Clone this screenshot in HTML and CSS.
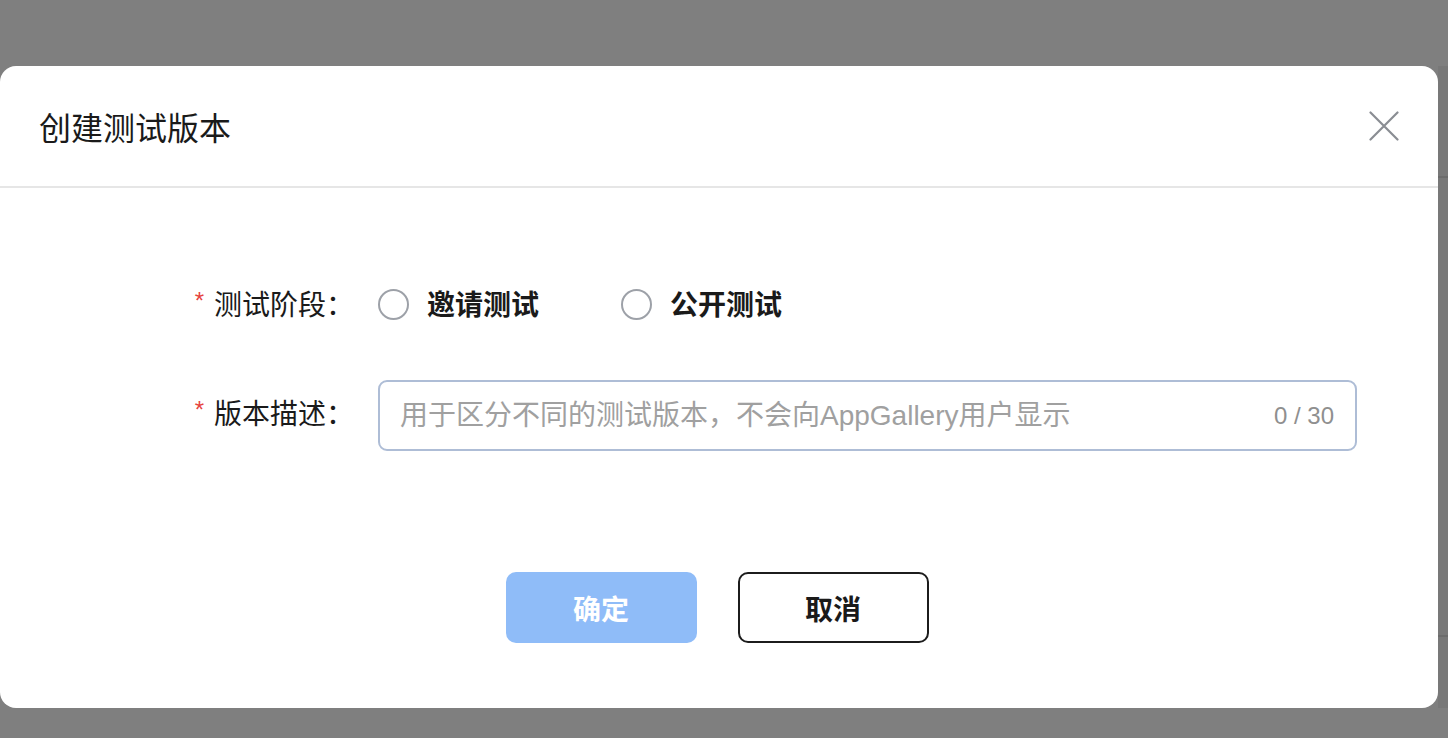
FILE: index.html
```html
<!DOCTYPE html>
<html lang="zh-CN">
<head>
<meta charset="utf-8">
<title>创建测试版本</title>
<link rel="stylesheet" href="styles.css">
</head>
<body>
<div class="page">
  <div class="dialog">
    <div class="dialog-header">
      <h1 class="dialog-title">创建测试版本</h1>
      <button class="close-btn" aria-label="关闭">
        <svg width="30" height="30" viewBox="0 0 30 30"><path d="M1.5 1.5 L28.5 28.5 M28.5 1.5 L1.5 28.5" stroke="#8a8d93" stroke-width="2.2" stroke-linecap="round" fill="none"/></svg>
      </button>
    </div>
    <div class="dialog-body">
      <div class="form-row row-radio">
        <div class="form-label"><span class="req">*</span>测试阶段：</div>
        <div class="form-control radios">
          <label class="radio"><span class="radio-circle"></span><span class="radio-text">邀请测试</span></label>
          <label class="radio"><span class="radio-circle"></span><span class="radio-text">公开测试</span></label>
        </div>
      </div>
      <div class="form-row row-input">
        <div class="form-label label-top"><span class="req">*</span>版本描述：</div>
        <div class="form-control">
          <div class="input-box">
            <input class="text-input" type="text" placeholder="用于区分不同的测试版本，不会向AppGallery用户显示">
            <span class="counter">0 / 30</span>
          </div>
        </div>
      </div>
    </div>
    <div class="dialog-footer">
      <button class="btn btn-primary">确定</button>
      <button class="btn btn-default">取消</button>
    </div>
  </div>
</div>
</body>
</html>
```

FILE: styles.css
```css
html, body {
  margin: 0;
  padding: 0;
}
body {
  width: 1448px;
  height: 738px;
  overflow: hidden;
  font-family: "Noto Sans CJK SC", "Noto Sans", sans-serif;
  background:
    linear-gradient(#6c6c6c, #6c6c6c) 1438px 176px / 10px 2px no-repeat,
    linear-gradient(#6c6c6c, #6c6c6c) 1438px 635px / 10px 2px no-repeat,
    linear-gradient(#787878, #787878) 1438px 66px / 10px 642px no-repeat,
    #7f7f7f;
}
.page {
  padding-top: 66px;
}
.dialog {
  width: 1438px;
  height: 642px;
  background: #ffffff;
  border-radius: 16px;
  display: flex;
  flex-direction: column;
  box-sizing: border-box;
}
.dialog-header {
  height: 120px;
  border-bottom: 2px solid #e6e6e6;
  display: flex;
  align-items: center;
  justify-content: space-between;
  padding: 0 39px;
}
.dialog-title {
  margin: 0;
  font-size: 32px;
  font-weight: 400;
  line-height: 1;
  color: #1a1a1a;
}
.close-btn {
  border: 0;
  background: none;
  padding: 0;
  width: 30px;
  height: 30px;
  display: block;
  cursor: pointer;
}
.close-btn svg {
  display: block;
}
.dialog-body {
  padding-top: 95px;
  display: flex;
  flex-direction: column;
  gap: 57px;
}
.form-row {
  display: flex;
}
.row-radio {
  height: 40px;
  align-items: center;
}
.form-label {
  width: 378px;
  box-sizing: border-box;
  padding-right: 24px;
  text-align: right;
  font-size: 28px;
  color: #1a1a1a;
  line-height: 40px;
  display: flex;
  justify-content: flex-end;
  align-items: center;
}
.label-top {
  height: 64px;
}
.req {
  color: #e64340;
  font-family: "Liberation Sans", sans-serif;
  font-size: 24px;
  margin-right: 10px;
  position: relative;
  top: -2px;
}
.form-control {
  flex: 0 0 979px;
}
.radios {
  display: flex;
  align-items: center;
  gap: 82px;
  position: relative;
  top: -2px;
}
.radio {
  display: flex;
  align-items: center;
  gap: 18px;
  cursor: pointer;
}
.radio-circle {
  width: 31px;
  height: 31px;
  box-sizing: border-box;
  border: 2px solid #9da1a8;
  border-radius: 50%;
  position: relative;
  top: 3px;
}
.radio-text {
  font-size: 28px;
  font-weight: 700;
  color: #1a1a1a;
  line-height: 40px;
  position: relative;
  top: 2px;
}
.input-box {
  height: 71px;
  box-sizing: border-box;
  border: 2px solid #aebdd6;
  border-radius: 9px;
  display: flex;
  align-items: center;
  padding: 0 21px 0 20px;
}
.text-input {
  flex: 1;
  border: 0;
  outline: none;
  background: transparent;
  padding: 0;
  font-family: "Liberation Sans", "Noto Sans CJK SC", sans-serif;
  font-size: 28px;
  color: #1a1a1a;
}
.text-input::placeholder {
  color: #a0a0a0;
}
.counter {
  font-family: "Liberation Sans", sans-serif;
  font-size: 24px;
  color: #8f8f8f;
}
.dialog-footer {
  margin-top: auto;
  padding-bottom: 65px;
  display: flex;
  justify-content: center;
  gap: 41px;
  padding-right: 4px;
}
.btn {
  width: 191px;
  height: 71px;
  box-sizing: border-box;
  border-radius: 10px;
  font-family: "Noto Sans CJK SC", "Noto Sans", sans-serif;
  font-size: 28px;
  font-weight: 700;
  cursor: pointer;
}
.btn-primary {
  background: #8fbcf8;
  border: 0;
  color: #ffffff;
}
.btn-default {
  background: #ffffff;
  border: 2px solid #1c1c1c;
  color: #1a1a1a;
}
```
